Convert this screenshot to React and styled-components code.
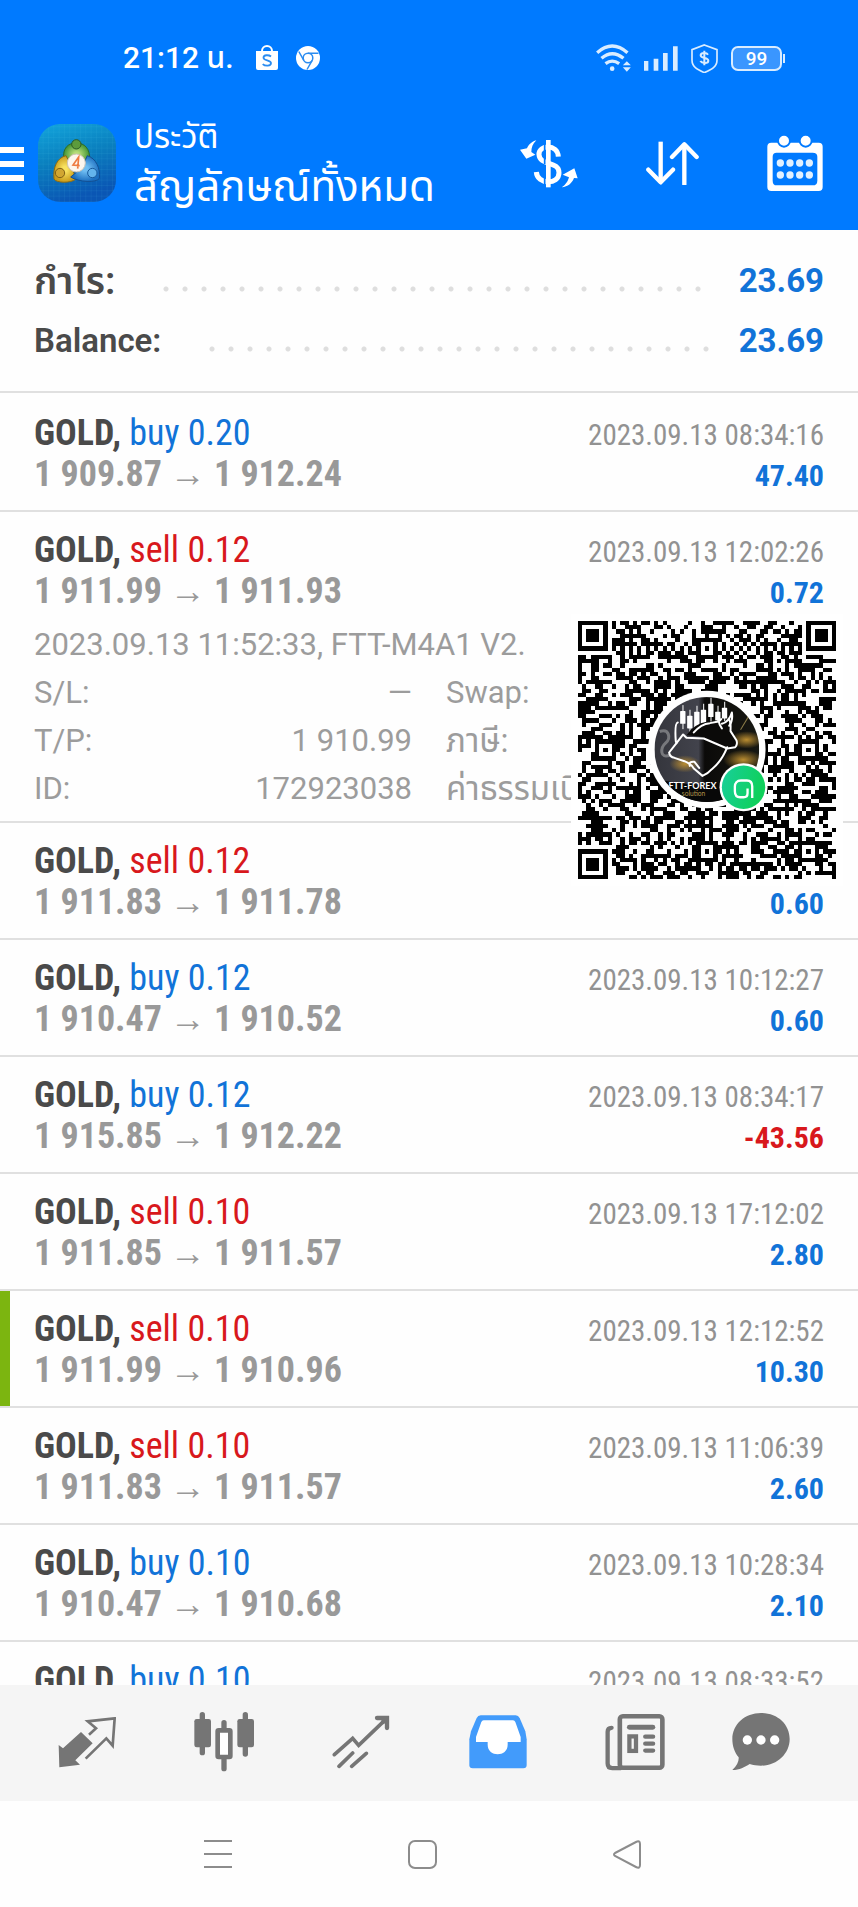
import React from "react";
import styled, { createGlobalStyle } from "styled-components";

const GlobalStyle = createGlobalStyle`
  * { box-sizing: border-box; }
  body { margin: 0; background: #fefefe; }
  button { border: 0; background: none; padding: 0; font: inherit; color: inherit; cursor: pointer; }
  svg { display: block; flex: none; }
  ul, dl, dd, p, h1 { margin: 0; padding: 0; }
`;

const sans = `Roboto, "Noto Sans", "Noto Sans Thai", sans-serif`;
const condensed = `"Roboto Condensed", "Liberation Sans Narrow", Roboto, sans-serif`;

const App = styled.div`
  height: 100vh;
  display: flex;
  flex-direction: column;
  font-family: ${sans};
  color: #4a4a4a;
  background: #fefefe;
`;

const Header = styled.header`
  flex: none;
  background: #007aff;
  color: #fff;
`;

const StatusBar = styled.div`
  display: flex;
  align-items: center;
  justify-content: space-between;
  height: 96px;
  padding: 20px 73px 0 123px;
`;

const StatusGroup = styled.div`
  display: flex;
  align-items: center;
  gap: ${(p) => p.$gap}px;
`;

const Clock = styled.span`
  font-size: 30px;
  line-height: 36px;
  font-weight: 500;
  margin-right: 4px;
`;

const Toolbar = styled.div`
  display: flex;
  align-items: center;
  height: 134px;
  padding-right: 27px;
`;

const MenuButton = styled.button`
  width: 38px;
  height: 60px;
  display: flex;
  align-items: center;
`;

const Titles = styled.div`
  flex: 1;
  margin-left: 18px;
  white-space: nowrap;
`;

const Section = styled.p`
  font-size: 33px;
  line-height: 48px;
`;

const Title = styled.h1`
  font-size: 42px;
  line-height: 52px;
  font-weight: 400;
`;

const Actions = styled.div`
  display: flex;
  gap: 51px;
`;

const ActionButton = styled.button`
  width: 72px;
  height: 72px;
  display: flex;
  align-items: center;
  justify-content: center;
`;

const Content = styled.main`
  flex: 1;
  min-height: 0;
  overflow: hidden;
`;

const Summary = styled.dl`
  padding: 21px 34px 20px;
  border-bottom: 2px solid #e0e0e0;
`;

const SummaryRow = styled.div`
  display: flex;
  height: 60px;
  font-size: 33px;
  line-height: 60px;
  font-weight: 600;
`;

const SummaryLabel = styled.dt`
  font-size: ${(p) => (p.$thai ? 38 : 33)}px;
`;

const Leader = styled.span`
  flex: 1;
  margin: 0 28px 0 35px;
  background: radial-gradient(circle at 16px 38px, #dedede 2px, transparent 3px) 0 0 / 19px 60px repeat-x;
`;

const Amount = styled.dd`
  color: #1173d8;
  font-weight: 700;
`;

const Deals = styled.ul`
  list-style: none;
  padding-top: 2px;
`;

const Deal = styled.li`
  position: relative;
  padding: 18px 34px ${(p) => (p.$open ? 8 : 15)}px;
  border-bottom: 2px solid #e0e0e0;
  box-shadow: ${(p) => (p.$marked ? "inset 10px 0 0 #7cb510" : "none")};
`;

const DealLine = styled.div`
  display: flex;
  align-items: baseline;
  justify-content: space-between;
  height: 41px;
  font-family: ${condensed};
  font-size: 36px;
  line-height: 41px;
  white-space: nowrap;
`;

const Symbol = styled.strong`
  font-weight: 700;
  color: #4a4a4a;
`;

const Side = styled.span`
  color: ${(p) => (p.$side === "buy" ? "#1173d8" : "#d8181c")};
`;

const Prices = styled.span`
  font-weight: 700;
  color: #999;
`;

const Arrow = styled.span`
  margin: 0 8px;
`;

const Time = styled.time`
  font-size: 29px;
  line-height: 36px;
  color: #929292;
`;

const Profit = styled.span`
  font-size: 30px;
  line-height: 36px;
  font-weight: 700;
  color: ${(p) => (p.$loss ? "#d8181c" : "#1173d8")};
`;

const Details = styled.div`
  margin-top: 9px;
  font-size: 31px;
  line-height: 48px;
  color: #9c9c9c;
  white-space: nowrap;
`;

const DetailGrid = styled.dl`
  display: grid;
  grid-template-columns: 1fr 1fr;
  column-gap: 34px;
`;

const DetailItem = styled.div`
  display: flex;
  justify-content: space-between;
  height: 48px;
`;

const DetailLabel = styled.dt`
  font-size: ${(p) => (p.$thai ? 33 : 31)}px;
`;

const QrCard = styled.div`
  position: absolute;
  z-index: 1;
  top: 102px;
  right: 15px;
  padding: 7px;
  background: #fff;
`;

const TabBar = styled.nav`
  flex: none;
  display: grid;
  grid-template-columns: repeat(5, 6fr) 5fr;
  height: 116px;
  padding: 0 40px 0 18px;
  background: #f5f5f5;
`;

const Tab = styled.button`
  display: flex;
  align-items: center;
  justify-content: center;
  padding-bottom: 2px;
  color: ${(p) => (p.$active ? "#429bfb" : "#757575")};
`;

const SystemBar = styled.nav`
  flex: none;
  display: grid;
  grid-template-columns: repeat(3, 1fr);
  height: 106px;
  padding: 0 129px 0 116px;
  background: #fefefe;
`;

const SystemButton = styled.button`
  display: flex;
  align-items: center;
  justify-content: center;
`;

/* Status icons */
const BagIcon = () => (
  <svg width="22" height="26" viewBox="0 0 22 26">
    <path d="M6 8V6a5 5 0 0 1 10 0v2" fill="none" stroke="#fff" strokeWidth="2" />
    <path d="M0 6h22v17a2 2 0 0 1-2 2H2a2 2 0 0 1-2-2z" fill="#fff" />
    <path d="M15 11.500C13 9.800 7.500 9.500 7.500 12.700c0 3.200 7.500 2 7.500 5.400 0 3.400-6 3.200-8.300 1" fill="none" stroke="#2b8cf0" strokeWidth="1.800" />
  </svg>
);

const ChromeIcon = () => (
  <svg width="24" height="24" viewBox="0 0 24 24">
    <circle cx="12" cy="12" r="12" fill="#fff" />
    <g fill="none" stroke="#2b8cf0" strokeWidth="1.500">
      <circle cx="12" cy="12" r="4.800" />
      <path d="M12 7.200h10.500M7.800 14.400L2.800 5.500M16.200 14.400L11 23.500" />
    </g>
  </svg>
);

const WifiIcon = () => (
  <svg width="35" height="28" viewBox="508 68 104 84">
    <g fill="none" stroke="#d9ecff" strokeWidth="10">
      <path d="M511 94Q556 54 602 94M524 111Q556 83 590 111M536 127Q556 112 577 127" />
    </g>
    <circle cx="556" cy="142" r="7" fill="#d9ecff" />
    <path d="M588 132l12-12 12 12zM588 138l12 13 12-13z" fill="#d9ecff" />
  </svg>
);

const SignalIcon = () => (
  <svg width="34" height="25" viewBox="640 74 102 75" fill="#d9ecff">
    <path d="M640 119h13v29h-13zM669 112h14v36h-14zM697 95h14v53h-14zM727 75h14v73h-14z" />
  </svg>
);

const ShieldIcon = () => (
  <svg width="27" height="29" viewBox="783 67 81 87" fill="none" stroke="#d9ecff">
    <path d="M823 70l38 14v32c0 20-18 28-38 37-20-9-37-17-37-37V84z" strokeWidth="5" />
    <path d="M834 99c-4-7-22-7-22 2 0 11 23 5 23 16 0 9-19 9-24 1M823 87v44" strokeWidth="6" />
  </svg>
);

const Battery = styled.span`
  position: relative;
  width: 51px;
  height: 25px;
  margin-right: 3px;
  border: 2px solid #d9ecff;
  border-radius: 7px;
  background: #3a96ff;
  font-size: 19px;
  line-height: 21px;
  font-weight: 500;
  text-align: center;
  &::after {
    content: "";
    position: absolute;
    right: -5px;
    top: 6px;
    width: 2px;
    height: 9px;
    background: #d9ecff;
  }
`;

/* Toolbar icons */
const MenuIcon = () => (
  <svg width="24" height="38" viewBox="0 0 24 38" fill="#fff">
    <path d="M0 3h24v6H0zM0 17h24v6H0zM0 31h24v6H0z" />
  </svg>
);

const AppIcon = () => (
  <svg width="78" height="78" viewBox="114 313 234 234">
    <defs>
      <linearGradient id="tile" x1="0" y1="0" x2="0.300" y2="1">
        <stop offset="0" stopColor="#12a5dc" />
        <stop offset="0.500" stopColor="#0a7fbe" />
        <stop offset="1" stopColor="#0a56b4" />
      </linearGradient>
      <radialGradient id="green"><stop offset="0.200" stopColor="#b6dd78" /><stop offset="1" stopColor="#3f9232" /></radialGradient>
      <radialGradient id="gold"><stop offset="0.200" stopColor="#f8e260" /><stop offset="1" stopColor="#c99a1a" /></radialGradient>
      <radialGradient id="blue"><stop offset="0.200" stopColor="#6fbdf2" /><stop offset="1" stopColor="#1c6fc0" /></radialGradient>
      <pattern id="grid" width="16" height="16" patternUnits="userSpaceOnUse">
        <path d="M0 0h16M0 0v16" stroke="#5fd0f0" strokeOpacity="0.200" strokeWidth="2" />
      </pattern>
    </defs>
    <rect x="114" y="313" width="234" height="234" rx="66" fill="url(#tile)" />
    <rect x="114" y="313" width="234" height="234" rx="66" fill="url(#grid)" />
    <path d="M191 420c-4-36 14-50 38-50s42 16 40 52l-16 16-46-4z" fill="url(#green)" stroke="#2c6b2c" strokeWidth="3" />
    <path d="M198 408c-26 6-40 34-36 70 6 12 50 14 66 0l-12-34z" fill="url(#gold)" stroke="#8b6b12" strokeWidth="3" />
    <path d="M262 408c26 8 40 38 36 68-8 14-62 12-86-4l34-28z" fill="url(#blue)" stroke="#134f92" strokeWidth="3" />
    <circle cx="229" cy="374" r="14" fill="#5c9b3c" stroke="#2c5b25" strokeWidth="3" />
    <circle cx="180" cy="460" r="14" fill="#d1a632" stroke="#805f14" strokeWidth="3" />
    <circle cx="277" cy="460" r="14" fill="#64b4ec" stroke="#18599c" strokeWidth="3" />
    <circle cx="229" cy="430" r="27" fill="#fdf6ee" stroke="#cfc5b8" strokeWidth="3" />
    <path d="M233 447l3-35-17 24 20 2" fill="none" stroke="#ee7b42" strokeWidth="5" />
  </svg>
);

const CurrencyIcon = () => (
  <svg width="58" height="49" viewBox="269 357 174 147" fill="none" stroke="#fff">
    <path d="M354 360v142" strokeWidth="14" />
    <path d="M384 410c-2-40-60-36-58-6 2 34 60 18 60 54 0 38-66 36-68-2" strokeWidth="15" />
    <path d="M343 372v60M343 444v50" stroke="#007aff" strokeWidth="5" />
    <path d="M318 361c-14 4-24 14-28 24l-21 4 19 27 27-12-12-8c0-14 4-24 15-35zM394 502c14-8 20-22 22-30l-19-8 35-19 10 30-11-1c-6 16-18 26-37 28z" fill="#fff" stroke="none" />
  </svg>
);

const SortIcon = () => (
  <svg width="53" height="44" viewBox="647 364 159 132" fill="none" stroke="#fff" strokeWidth="13">
    <path d="M691 366v120" />
    <path d="M654 450l37 38 37-38" strokeLinecap="round" strokeLinejoin="round" />
    <path d="M762 494V380" strokeLinecap="round" />
    <path d="M725 412l37-38 37 38" strokeLinecap="round" strokeLinejoin="round" />
  </svg>
);

const CalendarIcon = () => (
  <svg width="56" height="56" viewBox="1011 343 168 168">
    <path fillRule="evenodd" fill="#fff" d="M1024 366h142q12 0 12 12v121q0 12-12 12h-142q-12 0-12-12V378q0-12 12-12zM1040 396q-12 0-12 12v72q0 14 12 14h108q14 0 14-14v-72q0-12-14-12z" />
    {[1062, 1127].map((x) => (
      <circle key={x} cx={x} cy="360" r="18" fill="#fff" stroke="#007aff" strokeWidth="6" />
    ))}
    {[427, 463].map((y) =>
      [1051, 1080, 1109, 1138].map((x) => <circle key={`${x}-${y}`} cx={x} cy={y} r="11" fill="#e2f1ff" />)
    )}
  </svg>
);

/* Tab icons */
const QuotesIcon = () => (
  <svg width="58" height="51" viewBox="175 233 174 153">
    <path d="M177 317l13 10 54-49 35 34-52 51 14 13-62 8z" fill="currentColor" />
    <path d="M268 286l21-19-25-21 81-9-6 82-19-22-62 61" fill="none" stroke="currentColor" strokeWidth="8" />
  </svg>
);

const ChartIcon = () => (
  <svg width="60" height="60" viewBox="581 221 180 180" fill="currentColor">
    <rect x="598" y="221" width="16" height="130" rx="8" />
    <rect x="582" y="242" width="50" height="85" rx="7" />
    <rect x="727" y="221" width="16" height="134" rx="8" />
    <rect x="711" y="242" width="50" height="85" rx="7" />
    <rect x="663" y="245" width="16" height="154" rx="8" />
    <rect x="652" y="276" width="38" height="80" fill="#fff" stroke="currentColor" strokeWidth="14" rx="3" />
  </svg>
);

const TradeIcon = () => (
  <svg width="58" height="54" viewBox="995 226 174 162" fill="none" stroke="currentColor" strokeWidth="11" strokeLinecap="round">
    <path d="M1002 345l55-49 18 21 78-75M1016 380l41-40M1054 380l44-39" />
    <path d="M1130 235h30v30M1158 237l-10 10" strokeWidth="13" />
  </svg>
);

const HistoryIcon = () => (
  <svg width="58" height="54" viewBox="116 227 174 162">
    <path d="M151 228h105q8 0 12 8l17 40 4 24v77q0 10-10 10H127q-10 0-10-10v-77l5-24 17-40q4-8 12-8z" fill="currentColor" />
    <path d="M160 243h88q5 0 7 5l16 45v15h-39v8c0 38-60 38-60 0v-8h-35v-15l16-45q2-5 7-5z" fill="#fff" />
  </svg>
);

const NewsIcon = () => (
  <svg width="60" height="58" viewBox="526 220 182 174" fill="none" stroke="currentColor" strokeLinecap="round">
    <rect x="571" y="229" width="129" height="156" rx="9" strokeWidth="14" />
    <path d="M546 264q-12 0-12 12v96q0 14 14 14h26" strokeWidth="13" />
    <path d="M600 262h71" strokeWidth="15" />
    <rect x="600" y="290" width="20" height="44" strokeWidth="13" />
    <path d="M648 291h24M648 312h24M648 333h24" strokeWidth="13" />
  </svg>
);

const ChatIcon = () => (
  <svg width="58" height="58" viewBox="907 221 174 174">
    <path d="M994 221c50 0 86 34 86 78s-38 80-86 80c-12 0-24-2-34-5-16 10-30 18-52 18 14-13 20-26 19-38-12-14-19-34-19-55 0-44 38-78 86-78z" fill="currentColor" />
    {[953, 994, 1035].map((x) => <circle key={x} cx={x} cy="302" r="14" fill="#fff" />)}
  </svg>
);

/* System navigation icons */
const RecentsIcon = () => (
  <svg width="28" height="30" viewBox="0 0 28 30" stroke="#8c8c8c" strokeWidth="2">
    <path d="M0 2h28M0 15h28M0 28h28" />
  </svg>
);
const HomeIcon = () => (
  <svg width="29" height="29" viewBox="0 0 29 29">
    <rect x="1" y="1" width="27" height="27" rx="6" fill="none" stroke="#8c8c8c" strokeWidth="2" />
  </svg>
);
const BackIcon = () => (
  <svg width="28" height="29" viewBox="0 0 28 29">
    <path d="M2 13L23 2q4-2 4 2v21q0 4-4 2L2 16q-2-1.500 0-3z" fill="none" stroke="#8c8c8c" strokeWidth="2" />
  </svg>
);

/* QR code: fixed patterns of a 61-module symbol plus a seeded data area */
const SIZE = 61;
const ring = (x, y, cx, cy) => Math.max(Math.abs(x - cx), Math.abs(y - cy));
const buildModules = () => {
  let seed = 20230913;
  const cells = [];
  const finders = [[3, 3], [57, 3], [3, 57]];
  const aligns = [[30, 6], [6, 30], [54, 30], [30, 54], [54, 54]];
  for (let y = 0; y < SIZE; y++) {
    for (let x = 0; x < SIZE; x++) {
      seed = (seed * 1103515245 + 12345) % 2147483648;
      let on = (seed >> 12) % 100 < 53;
      if (x === 6 || y === 6) on = (x + y) % 2 === 0;
      aligns.forEach(([cx, cy]) => {
        const d = ring(x, y, cx, cy);
        if (d <= 2) on = d !== 1;
      });
      finders.forEach(([cx, cy]) => {
        const d = ring(x, y, cx, cy);
        if (d <= 4) on = d <= 1 || d === 3;
      });
      if (on) cells.push(`M${x} ${y}h1v1h-1z`);
    }
  }
  return cells.join("");
};
const MODULES = buildModules();

const candles = [
  [369, 334, 372], [390, 348, 386], [411, 336, 386], [431, 330, 378], [453, 312, 352], [474, 336, 362], [494, 324, 356],
];

const QrCode = () => (
  <svg width="258" height="258" viewBox="55 64 773 773" role="img" aria-label="QR code">
    <defs>
      <clipPath id="disc"><circle cx="441" cy="449" r="157" /></clipPath>
      <linearGradient id="dark" x1="0" x2="1">
        <stop offset="0" stopColor="#34353c" />
        <stop offset="0.420" stopColor="#42434c" />
        <stop offset="0.480" stopColor="#0b0a09" />
        <stop offset="1" stopColor="#171812" />
      </linearGradient>
      <linearGradient id="mint" x1="0" x2="1" y2="0.300">
        <stop offset="0" stopColor="#18cf9c" />
        <stop offset="1" stopColor="#0fd05a" />
      </linearGradient>
      <radialGradient id="glow"><stop offset="0" stopColor="#b98c30" /><stop offset="1" stopColor="#b98c30" stopOpacity="0" /></radialGradient>
    </defs>
    <g transform="translate(55 64) scale(12.672)">
      <path d={MODULES} shapeRendering="crispEdges" />
    </g>
    <circle cx="441" cy="449" r="176" fill="#fff" />
    <g clipPath="url(#disc)">
      <rect x="284" y="292" width="314" height="314" fill="url(#dark)" />
      <ellipse cx="375" cy="492" rx="46" ry="26" fill="url(#glow)" />
      <ellipse cx="560" cy="420" rx="50" ry="26" fill="url(#glow)" />
      <ellipse cx="550" cy="480" rx="60" ry="30" fill="url(#glow)" />
      <path d="M300 395c28-10 34 20 18 34s-20 50 14 36" fill="none" stroke="#77787c" strokeWidth="9" />
      <path d="M572 340l-30 50" stroke="#8b7c48" strokeWidth="3" />
      <path d="M300 540q130 30 290-6v76H300z" fill="#080808" />
      {candles.map(([x, top, bottom]) => (
        <g key={x} fill="#fff">
          <rect x={x - 8} y={top} width="16" height={bottom - top} rx="2" />
          <rect x={x - 1} y={top - 18} width="3" height={bottom - top + 34} />
        </g>
      ))}
      <g transform="translate(240 240)" fill="none" stroke="#fff" strokeWidth="6" strokeLinejoin="round" strokeLinecap="round">
        <path d="M140 166q24-34 60-40l38-2 24 0 30 62-4 16-26 4-64-34z" fill="#0b0a09" stroke="none" />
        <path d="M114 128q-10 2-6 56l2 6-22 28q2 14 16 16l30 10q20 8 28 22l26 22q16-6 28-20 30-24 46-66" />
        <path d="M110 190l20-26 10 10 52 2 70 30 24-4q8-8 4-20l-18-28q2-30-6-36" />
        <path d="M162 158q22-26 48-28l22-4q8-2 12-8M236 122q2 14 10 24M246 132q22-6 30-34 4 24-8 40M150 258q-4-14 14-12l14 18" />
      </g>
      <text x="326" y="566" fill="#fff" fontFamily="Lato, sans-serif" fontSize="27" fontWeight="700">FTT-FOREX</text>
      <text x="366" y="588" fill="#b5994c" fontFamily="Lato, sans-serif" fontSize="20">solution</text>
    </g>
    <circle cx="551" cy="562" r="72" fill="#fff" />
    <circle cx="551" cy="562" r="65" fill="url(#mint)" />
    <path d="M577 594V560c0-12-6-18-16-18h-18c-12 0-18 8-18 18v14c0 12 6 18 16 18h10c8 0 12-4 12-12v-14" fill="none" stroke="#fff" strokeWidth="7" />
  </svg>
);

const deals = [
  { side: "buy", lots: "0.20", from: "1 909.87", to: "1 912.24", time: "2023.09.13 08:34:16", profit: "47.40" },
  { side: "sell", lots: "0.12", from: "1 911.99", to: "1 911.93", time: "2023.09.13 12:02:26", profit: "0.72", open: true },
  { side: "sell", lots: "0.12", from: "1 911.83", to: "1 911.78", profit: "0.60" },
  { side: "buy", lots: "0.12", from: "1 910.47", to: "1 910.52", time: "2023.09.13 10:12:27", profit: "0.60" },
  { side: "buy", lots: "0.12", from: "1 915.85", to: "1 912.22", time: "2023.09.13 08:34:17", profit: "-43.56" },
  { side: "sell", lots: "0.10", from: "1 911.85", to: "1 911.57", time: "2023.09.13 17:12:02", profit: "2.80" },
  { side: "sell", lots: "0.10", from: "1 911.99", to: "1 910.96", time: "2023.09.13 12:12:52", profit: "10.30", marked: true },
  { side: "sell", lots: "0.10", from: "1 911.83", to: "1 911.57", time: "2023.09.13 11:06:39", profit: "2.60" },
  { side: "buy", lots: "0.10", from: "1 910.47", to: "1 910.68", time: "2023.09.13 10:28:34", profit: "2.10" },
  { side: "buy", lots: "0.10", time: "2023.09.13 08:33:52" },
];

const details = [
  { label: "S/L:", value: "—" },
  { label: "Swap:" },
  { label: "T/P:", value: "1 910.99" },
  { label: "ภาษี:", thai: true },
  { label: "ID:", value: "172923038" },
  { label: "ค่าธรรมเนียม:", thai: true },
];

const tabs = [
  ["Quotes", QuotesIcon], ["Chart", ChartIcon], ["Trade", TradeIcon],
  ["History", HistoryIcon], ["News", NewsIcon], ["Messages", ChatIcon],
];

function DealRow({ deal }) {
  return (
    <Deal $open={deal.open} $marked={deal.marked}>
      <DealLine>
        <span>
          <Symbol>GOLD,</Symbol> <Side $side={deal.side}>{deal.side} {deal.lots}</Side>
        </span>
        {deal.time && <Time>{deal.time}</Time>}
      </DealLine>
      {deal.from && (
        <DealLine>
          <Prices>{deal.from}<Arrow>→</Arrow>{deal.to}</Prices>
          <Profit $loss={deal.profit.startsWith("-")}>{deal.profit}</Profit>
        </DealLine>
      )}
      {deal.open && (
        <>
          <Details>
            <p>2023.09.13 11:52:33, FTT-M4A1 V2.</p>
            <DetailGrid>
              {details.map(({ label, value, thai }) => (
                <DetailItem key={label}>
                  <DetailLabel $thai={thai}>{label}</DetailLabel>
                  <dd>{value}</dd>
                </DetailItem>
              ))}
            </DetailGrid>
          </Details>
          <QrCard><QrCode /></QrCard>
        </>
      )}
    </Deal>
  );
}

export default function HistoryScreen() {
  return (
    <App>
      <GlobalStyle />
      <Header>
        <StatusBar>
          <StatusGroup $gap={18}>
            <Clock>21:12 น.</Clock>
            <BagIcon />
            <ChromeIcon />
          </StatusGroup>
          <StatusGroup $gap={13}>
            <WifiIcon />
            <SignalIcon />
            <ShieldIcon />
            <Battery>99</Battery>
          </StatusGroup>
        </StatusBar>
        <Toolbar>
          <MenuButton aria-label="Menu"><MenuIcon /></MenuButton>
          <AppIcon />
          <Titles>
            <Section>ประวัติ</Section>
            <Title>สัญลักษณ์ทั้งหมด</Title>
          </Titles>
          <Actions>
            <ActionButton aria-label="Symbols"><CurrencyIcon /></ActionButton>
            <ActionButton aria-label="Sort"><SortIcon /></ActionButton>
            <ActionButton aria-label="Period"><CalendarIcon /></ActionButton>
          </Actions>
        </Toolbar>
      </Header>
      <Content>
        <Summary>
          <SummaryRow><SummaryLabel $thai>กำไร:</SummaryLabel><Leader /><Amount>23.69</Amount></SummaryRow>
          <SummaryRow><SummaryLabel>Balance:</SummaryLabel><Leader /><Amount>23.69</Amount></SummaryRow>
        </Summary>
        <Deals>
          {deals.map((deal, i) => <DealRow key={i} deal={deal} />)}
        </Deals>
      </Content>
      <TabBar>
        {tabs.map(([label, Icon]) => (
          <Tab key={label} aria-label={label} $active={label === "History"}><Icon /></Tab>
        ))}
      </TabBar>
      <SystemBar>
        <SystemButton aria-label="Recent apps"><RecentsIcon /></SystemButton>
        <SystemButton aria-label="Home"><HomeIcon /></SystemButton>
        <SystemButton aria-label="Back"><BackIcon /></SystemButton>
      </SystemBar>
    </App>
  );
}
